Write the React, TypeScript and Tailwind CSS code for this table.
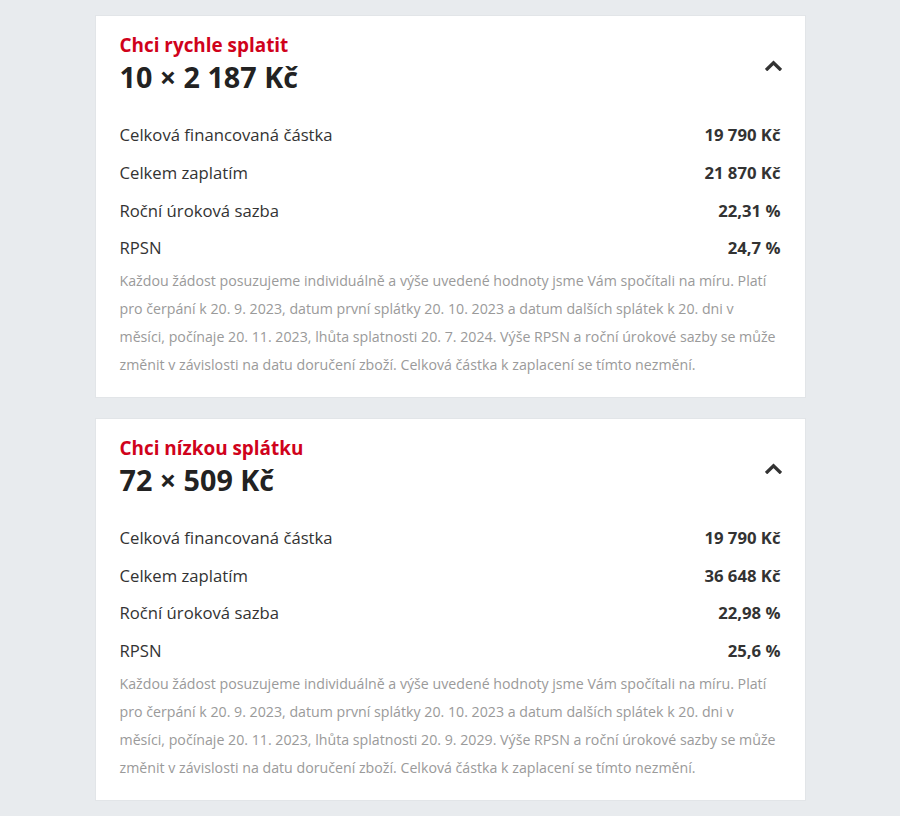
type Offer = {
  title: string;
  installment: string;
  rows: [string, string][];
  note: string;
};

const offers: Offer[] = [
  {
    title: "Chci rychle splatit",
    installment: "10 × 2 187 Kč",
    rows: [
      ["Celková financovaná částka", "19 790 Kč"],
      ["Celkem zaplatím", "21 870 Kč"],
      ["Roční úroková sazba", "22,31 %"],
      ["RPSN", "24,7 %"],
    ],
    note:
      "Každou žádost posuzujeme individuálně a výše uvedené hodnoty jsme Vám spočítali na míru. Platí pro čerpání k 20. 9. 2023, datum první splátky 20. 10. 2023 a datum dalších splátek k 20. dni v měsíci, počínaje 20. 11. 2023, lhůta splatnosti 20. 7. 2024. Výše RPSN a roční úrokové sazby se může změnit v závislosti na datu doručení zboží. Celková částka k zaplacení se tímto nezmění.",
  },
  {
    title: "Chci nízkou splátku",
    installment: "72 × 509 Kč",
    rows: [
      ["Celková financovaná částka", "19 790 Kč"],
      ["Celkem zaplatím", "36 648 Kč"],
      ["Roční úroková sazba", "22,98 %"],
      ["RPSN", "25,6 %"],
    ],
    note:
      "Každou žádost posuzujeme individuálně a výše uvedené hodnoty jsme Vám spočítali na míru. Platí pro čerpání k 20. 9. 2023, datum první splátky 20. 10. 2023 a datum dalších splátek k 20. dni v měsíci, počínaje 20. 11. 2023, lhůta splatnosti 20. 9. 2029. Výše RPSN a roční úrokové sazby se může změnit v závislosti na datu doručení zboží. Celková částka k zaplacení se tímto nezmění.",
  },
];

export default function App() {
  return (
    <div className="min-h-[816px] bg-[#e8ebee] pt-[15px] font-['Open_Sans',sans-serif] text-[#222]">
      <div className="mx-auto flex w-[711px] flex-col gap-[20px]">
        {offers.map((offer) => (
          <OfferCard key={offer.title} offer={offer} />
        ))}
      </div>
    </div>
  );
}

function OfferCard({ offer }: { offer: Offer }) {
  return (
    <section className="border border-[#e2e5e8] bg-white px-6 pb-[18px] pt-[17px]">
      <div className="flex items-start justify-between">
        <div>
          <p className="text-[18.9px] font-bold leading-6 text-[#d0021b]">{offer.title}</p>
          <h2 className="mt-0.5 text-[28.7px] font-bold leading-9 text-[#222]">{offer.installment}</h2>
        </div>
        <button className="-mr-[1px] mt-[27px]" aria-label="Sbalit">
          <svg width="17" height="11" viewBox="0 0 17 11" fill="none">
            <path d="M2.2 9 L8.5 2.8 L14.8 9" stroke="#333" strokeWidth="3.3" strokeLinecap="square" />
          </svg>
        </button>
      </div>
      <dl className="mt-[21px]">
        {offer.rows.map(([label, value]) => (
          <div key={label} className="flex h-[37.7px] items-center justify-between text-[16.7px]">
            <dt className="text-[#333]">{label}</dt>
            <dd className="font-bold text-[#333]">{value}</dd>
          </div>
        ))}
      </dl>
      <p className="text-[14.2px] leading-7 text-[#9a9a9a]">{offer.note}</p>
    </section>
  );
}
